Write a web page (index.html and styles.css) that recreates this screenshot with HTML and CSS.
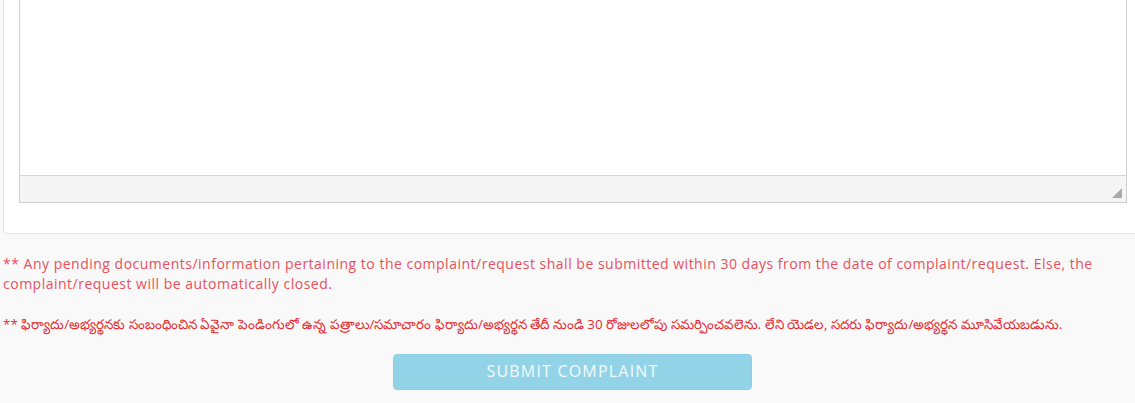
FILE: index.html
```html
<!DOCTYPE html>
<html lang="en">
<head>
<meta charset="utf-8">
<title>Submit Complaint</title>
<link rel="stylesheet" href="styles.css">
</head>
<body>
<div class="page">
  <div class="panel">
    <div class="editor">
      <div class="editor-body"></div>
      <div class="editor-status"><span class="resize"></span></div>
    </div>
  </div>
  <div class="notes">
    <p class="note en">** Any pending documents/information pertaining to the complaint/request shall be submitted within 30 days from the date of complaint/request. Else, the complaint/request will be automatically closed.</p>
    <p class="note te">** ఫిర్యాదు/అభ్యర్థనకు సంబంధించిన ఏవైనా పెండింగులో ఉన్న పత్రాలు/సమాచారం ఫిర్యాదు/అభ్యర్థన తేదీ నుండి 30 రోజులలోపు సమర్పించవలెను. లేని యెడల, సదరు ఫిర్యాదు/అభ్యర్థన మూసివేయబడును.</p>
  </div>
  <div class="actions">
    <button class="submit" type="button">SUBMIT COMPLAINT</button>
  </div>
</div>
</body>
</html>
```
FILE: styles.css
```css
html, body {
  margin: 0;
  padding: 0;
  background: #f9f9f9;
  overflow: hidden;
}
body {
  font-family: "Open Sans", "Noto Sans", "DejaVu Sans", sans-serif;
  width: 1135px;
  height: 403px;
}
.page {
  width: 1135px;
}
.panel {
  margin-left: 3px;
  margin-right: -12px;
  background: #ffffff;
  border: 1px solid #d3e8f0;
  border-top: none;
  border-radius: 0 0 4px 4px;
  padding: 0 15px 30px 15px;
}
.editor {
  width: 1108px;
  box-sizing: border-box;
  border: 1px solid #cfcfcf;
  border-top: none;
}
.editor-body {
  height: 175px;
  background: #ffffff;
  border-bottom: 1px solid #d4d4d4;
}
.editor-status {
  height: 26px;
  background: #f5f5f5;
  position: relative;
}
.resize {
  position: absolute;
  right: 4px;
  bottom: 4px;
  width: 0;
  height: 0;
  border-style: solid;
  border-width: 0 0 10px 10px;
  border-color: transparent transparent #a9a9a9 transparent;
}
.notes {
  padding: 20px 3px 0 3px;
}
.note {
  margin: 0;
  font-size: 14px;
  line-height: 20px;
}
.note.en {
  color: #e8505b;
  letter-spacing: 0.5px;
}
.note.te {
  color: #e52a30;
  font-size: 13.4px;
  margin-top: 20px;
}
.actions {
  display: flex;
  justify-content: center;
  padding-top: 20px;
  padding-left: 10px;
}
.submit {
  width: 359px;
  height: 36px;
  background: #93d3e7;
  border: 1px solid #8ccde2;
  border-radius: 4px;
  color: #f4fbfd;
  font-family: "Open Sans", "Noto Sans", sans-serif;
  font-size: 16px;
  letter-spacing: 1.2px;
  padding: 0 0 3px 0;
}
```
